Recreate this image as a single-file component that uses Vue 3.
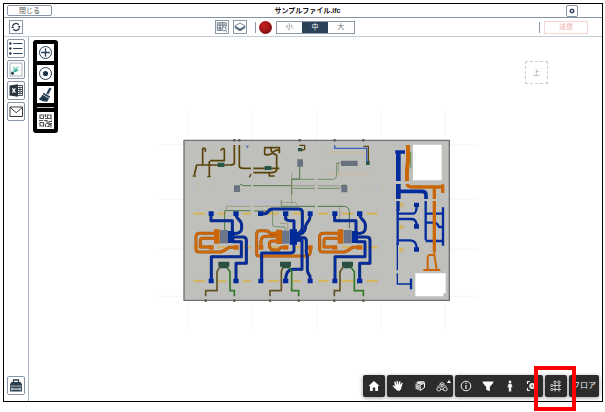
<script setup>
import { ref } from 'vue'

const size = ref('中')
const sizes = ['小', '中', '大']
const verticals = [24, 217, 410, 603, 796]
const horizontals = [29, 193, 342, 484]
const dashRows = [236, 337, 438]
const dashColumns = [[40, 75], [113, 138], [188, 213], [262, 297], [338, 363], [415, 445], [485, 520], [560, 593]]
const twinUnits = [0, 371]
const risers = [77, 163, 270, 356, 463, 550]
</script>

<template>
  <div class="page">
    <main class="frame">
      <header class="titlebar">
        <button class="close" type="button">閉じる</button>
        <h1>サンプルファイル.ifc</h1>
        <button class="gear" type="button" aria-label="設定">
          <svg viewBox="0 0 12 12"><circle cx="6" cy="6" r="2" fill="none" stroke="#34435a" stroke-width="1.6" /><circle cx="6" cy="6" r="2.8" fill="none" stroke="#34435a" stroke-width=".8" stroke-dasharray="1.1 1.1" /></svg>
        </button>
      </header>

      <div class="toolbar">
        <div class="zone left">
          <button class="tool" type="button" aria-label="更新">
            <svg viewBox="0 0 14 14" fill="none" stroke="#1f3347" stroke-width="1.4"><path d="M2.9 6.2A4.200 4.200 0 0 1 10.200 4.400M11.100 7.800A4.200 4.200 0 0 1 3.800 9.600" /><path d="M8.800 5.800h4L11 8ZM5.200 8.200h-4L3 6Z" fill="#1f3347" stroke="none" /></svg>
          </button>
        </div>
        <div class="zone middle">
          <button class="tool" type="button" aria-label="図面">
            <svg viewBox="0 0 14 14" fill="none" stroke="#5c6d7e" stroke-width="1"><path d="M1.500 2h10.500v5.500M1.500 2v9h5.500M1.500 5h10M4.700 2v9M8 2v5M1.500 8h5.500M3 3.600h1M6 3.600h1M9 3.600h2M3 9.500h3" /><circle cx="9.500" cy="9.300" r="2.300" /><path d="m11 11 1.700 1.700" /></svg>
          </button>
          <button class="tool" type="button" aria-label="レイヤー">
            <svg viewBox="0 0 14 14"><path d="M1 5.800v2.400L7 12l6-3.800V5.800L7 9.300Z" fill="#50657a" /><path d="M7 2.300 13 5.800 7 9.300 1 5.800Z" fill="#fff" stroke="#50657a" stroke-width=".9" /></svg>
          </button>
          <span class="rule"></span>
          <button class="ball" type="button" aria-label="色"></button>
          <div class="segments">
            <button v-for="s in sizes" :key="s" type="button" :class="{ active: s === size }" @click="size = s">{{ s }}</button>
          </div>
        </div>
        <div class="zone right">
          <span class="rule"></span>
          <button class="send" type="button">送信</button>
        </div>
      </div>

      <div class="body">
        <nav class="sidebar">
          <button type="button" aria-label="一覧">
            <svg viewBox="0 0 16 16" stroke="#2e4459" fill="#1c3044"><path d="M5.200 3h9.300M5.200 8h9.300M5.200 13h9.300" stroke-width="1.100" /><g stroke="none"><circle cx="2.300" cy="3" r="1.200" /><circle cx="2.300" cy="8" r="1.200" /><circle cx="2.300" cy="13" r="1.200" /></g></svg>
          </button>
          <button type="button" aria-label="ビュー">
            <svg viewBox="0 0 16 16"><path d="M2 1.500h12v13H2Z" fill="#fff" stroke="#8f9ba8" stroke-width=".8" /><path d="M4.800 11.500 5 4.200l2 2 4.500-1.700-2 3.500 2.500 1Z" fill="#9bd8cd" /><path d="m4.500 11.500 3.700-4.500 1.500 2.300Z" fill="#36ad9c" /><path d="m3.500 9.700 2.800 2-1.300 1.900-2-1Z" fill="#253846" /></svg>
          </button>
          <button type="button" aria-label="Excel">
            <svg viewBox="0 0 16 16"><path d="M9 3h5.500v10H9Z" fill="#fff" stroke="#353d46" stroke-width=".9" /><path d="M10 5h4M10 7h4M10 9h4M10 11h4M12 4v8" stroke="#454d56" stroke-width="1" /><path d="M1.500 3.100 10 1.800v12.400l-8.500-1.300Z" fill="#293541" /><path d="m4.300 5.800 3 4.400m0-4.400-3 4.400" stroke="#fff" stroke-width="1.200" /></svg>
          </button>
          <button type="button" aria-label="メール">
            <svg viewBox="0 0 16 16" fill="none" stroke="#3c3839" stroke-width="1"><path d="M2 3.500h12.500v9.500H2Z" /><path d="m2 3.700 6.200 5.500 6.300-5.500" /></svg>
          </button>
          <button class="bottom" type="button" aria-label="ツールボックス">
            <svg viewBox="0 0 16 16"><path d="M5.500 4.800V2.500h5v2.300" fill="none" stroke="#2d4052" stroke-width="1.300" /><path d="M3.500 4.500h9L14 6.700v2.500H2V6.700ZM2 9.500h12v4.500H2Z" fill="#2d4052" /><path d="M3 10.400 4.700 11.500h6.600L13 10.400M3 13l1.700-1.500M13 13l-1.700-1.500" fill="none" stroke="#fff" stroke-width="1" /><path d="M2.500 8.300h11" stroke="#b9c2ca" stroke-width=".6" /></svg>
          </button>
        </nav>

        <section class="canvas">
          <svg class="scene" viewBox="-453 -294 1719 1092" fill="none" role="img" aria-label="設備平面図">
            <g stroke="#f0f0ef" stroke-width="2">
              <path v-for="x in verticals" :key="'v' + x" :d="`M${x} -70V580`" />
              <path v-for="y in horizontals" :key="'h' + y" :d="`M-70 ${y}H890`" />
            </g>
            <path d="M12 16H808V496H12Z" fill="#bfc0bc" stroke="#6f716f" stroke-width="4" />
            <path d="M143 195h65v9h-65ZM225 195h75v9h-75Z" fill="#b5b9cb" opacity=".6" />
            <path d="M143 186h65M225 186h78" stroke="#d2c59e" stroke-width="2" opacity=".5" />

            <g stroke="#d3b463" stroke-width="7">
              <template v-for="y in dashRows" :key="y">
                <path v-for="c in dashColumns" :key="c[0]" :d="`M${c[0]} ${y}H${c[1]}`" />
              </template>
            </g>
            <g stroke="#d4b970" stroke-width="2" opacity=".8"><path d="M440 52h135M440 118h133" /><path d="M53 162h6M98 162h6M186 162h6M242 162h6M510 162h6M560 162h6M605 162h6M84 52h5M112 54h5" stroke-width="3" /></g>
            <g fill="#d3b463"><path d="M658 203h12v12h-12ZM658 270h12v12h-12ZM658 338h12v12h-12Z" /></g>

            <g stroke="#5a430a" stroke-width="5" stroke-linejoin="round">
              <path d="M163 30V85Q161 90 150 90H50L43 120M68 90V42Q71 37 76 42V50M88 125V78M90 77H133V43Q128 37 122 47M178 30V95Q180 100 190 100H213M220 100H298M300 48Q289 40 274 56Q262 62 254 58V38H298V55M272 38Q273 57 290 60V105Q287 113 275 113H220M268 113V123H284" />
              <path d="M358 31h16v12q-6 5-16 1M550 34h15v50" stroke-width="4" />
            </g>
            <path d="M38 123h10M82 125h10M208 127l5-10" stroke="#5a430a" stroke-width="4" />
            <g fill="#555"><circle cx="163" cy="16" r="4" /><circle cx="178" cy="16" r="4" /><circle cx="359" cy="16" r="4" /><circle cx="464" cy="16" r="4" /><circle cx="550" cy="16" r="4" /></g>
            <g fill="#285747"><path d="M113 83h20v13h-20ZM254 93h20v12h-20ZM354 39h13v10h-13ZM558 78h11v12h-11Z" /></g>
            <path d="M464 30v10h96v42" stroke="#395fbb" stroke-width="4" />
            <path d="m197 32 5 8 5-8Z" fill="#4b73b8" />
            <g fill="#6a7180"><path d="M352 73h17v22h-17ZM162 151h18v20h-18ZM483 77h50v16h-50ZM484 150h18v22h-18Z" /></g>
            <g stroke="#4b7842" stroke-width="2">
              <path d="M180 148q5 0 8 4H214M220 152H335M359 95V132H335V180M302 214H405M413 214H493Q507 215 508 230V280M134 290V227H212M222 228H278" stroke-width="3" />
              <path d="M335 133H405M413 133H460Q470 132 470 120V84H483M335 160H405M413 160H478L488 150H498M278 228V272Q280 276 315 276V288M304 195V214" />
            </g>
            <g stroke="#8b8b70" stroke-width="2"><path d="M335 113V207M335 152H405M413 152H478M139 227V214H210M220 214H300M479 215V262M475 82v30M300 202h46l9 13M300 265H323V285" /></g>
            <path d="M692 50V100" stroke="#608d45" stroke-width="3" />

            <g v-for="dx in twinUnits" :key="dx" :transform="`translate(${dx} 0)`">
              <g stroke-linejoin="round" stroke-linecap="round">
                <path d="M104 295H59Q48 295 48 305V342Q48 351 58 351H122Q133 348 148 337H168M102 310H69Q61 310 61 318V336H93" stroke="#9a5510" stroke-width="9" />
                <path d="M104 295H59Q48 295 48 305V342Q48 351 58 351H122Q133 348 148 337H168M102 310H69Q61 310 61 318V336H93" stroke="#d26806" stroke-width="6" />
                <path d="M93 240V257H157V290M168 240Q170 249 182 260Q187 270 184 285Q182 296 158 296M160 306H189Q199 306 199 316V385H168V435M160 320H184V365H94V435" stroke="#10286b" stroke-width="9" />
                <path d="M93 240V257H157V290M168 240Q170 249 182 260Q187 270 184 285Q182 296 158 296M160 306H189Q199 306 199 316V385H168V435M160 320H184V365H94V435" stroke="#042ca0" stroke-width="6" />
              </g>
              <path d="M86 229h15v14H86ZM160 229h16v14h-16ZM86 431h15v14H86ZM160 431h16v14h-16ZM144 288h19v36h-19Z" fill="#002a9a" />
              <path d="M102 283h17v43h-17ZM86 331h15v13H86ZM160 331h16v13h-16Z" fill="#cb660a" />
              <path d="M120 285h24v40h-24Z" fill="#6b7689" />
            </g>

            <g stroke-linejoin="round" stroke-linecap="round">
              <path d="M290 295H271Q266 287 255 287H239Q230 287 230 297V357Q230 363 238 363H380Q391 361 391 350V337M243 337V319Q244 304 257 304H290M290 318H279Q268 318 268 328Q268 345 282 345H296L303 337H318" stroke="#9a5510" stroke-width="9" />
              <path d="M290 295H271Q266 287 255 287H239Q230 287 230 297V357Q230 363 238 363H380Q391 361 391 350V337M243 337V319Q244 304 257 304H290M290 318H279Q268 318 268 328Q268 345 282 345H296L303 337H318" stroke="#d26806" stroke-width="6" />
              <path d="M242 236H252Q262 237 268 225L276 222H356Q367 222 367 232V276Q367 291 350 297M317 240V251Q319 256 329 257H342V290M390 240Q392 252 382 263Q376 269 376 280Q375 294 350 302M342 320V346Q343 353 330 354H245V435M350 308H372Q379 309 379 319V345Q377 351 382 363V403Q382 415 390 423V435M350 316H366V403H338Q317 405 317 435" stroke="#10286b" stroke-width="9" />
              <path d="M242 236H252Q262 237 268 225L276 222H356Q367 222 367 232V276Q367 291 350 297M317 240V251Q319 256 329 257H342V290M390 240Q392 252 382 263Q376 269 376 280Q375 294 350 302M342 320V346Q343 353 330 354H245V435M350 308H372Q379 309 379 319V345Q377 351 382 363V403Q382 415 390 423V435M350 316H366V403H338Q317 405 317 435" stroke="#042ca0" stroke-width="6" />
            </g>
            <path d="M234 229h16v14h-16ZM309 229h16v14h-16ZM383 229h15v14h-15ZM235 431h15v14h-15ZM309 431h16v14h-16ZM383 431h15v14h-15ZM329 283h22v46h-22Z" fill="#002a9a" />
            <path d="M288 284h18v43h-18ZM236 330h14v14h-14ZM310 331h15v13h-15ZM384 331h14v14h-14Z" fill="#cb660a" />
            <path d="M306 287h22v39h-22Z" fill="#6b7689" />

            <g stroke-width="5">
              <path d="M120 395 111 410V467H77V484M309 395 304 410V467H270V484M490 395 480 410V467H463V484" stroke="#625223" />
              <path d="M140 395 150 410V467H163V484M327 395 335 410V467H356V484M512 395 523 410V467H550V484" stroke="#327629" />
            </g>
            <path d="M115 380h33v15h-5v5h-23v-5h-5ZM300 380h33v15h-5v5h-22v-5h-6ZM486 380h33v15h-5v5h-23v-5h-5Z" fill="#294f40" />
            <circle v-for="x in risers" :key="x" :cx="x" cy="497" r="4" fill="#515950" />

            <g stroke="#022b9c" stroke-linejoin="round">
              <path d="M655 50V138M655 147V192" stroke-width="14" />
              <path d="M654 198V228" stroke-width="10" />
              <path d="M646 51H675M660 169H727Q738 170 738 180V192" stroke-width="11" />
              <path d="M653 225V330" stroke-width="7" />
              <path d="M652 325V406M652 415V447H692" stroke-width="4" />
              <path d="M655 236H700Q710 235 710 210M655 252H695Q710 252 710 274M655 316H690Q710 315 710 343M737 198V316M737 236H790M737 263H764Q772 264 777 276H789M737 318H790M789 217V332" stroke-width="7" />
              <path d="M693 431v32" stroke-width="7" />
            </g>
            <path d="M702 203h15v13h-15ZM702 268h15v13h-15ZM702 337h15v13h-15Z" fill="#002a9a" />
            <g stroke="#c96606" stroke-linejoin="round">
              <path d="M684 30V80Q680 95 681 138" stroke-width="12" />
              <path d="M681 147Q683 156 695 156H783M763 156V192M763 198V350" stroke-width="10" />
              <path d="M788 148v26" stroke-width="10" />
              <path d="M763 350V360L770 403M763 360H748Q743 361 743 371V403M730 405H781" stroke-width="6" />
            </g>
            <path d="M699 29h86v107h-86ZM706 415h91v60h-7v9h-84Z" fill="#fff" />
          </svg>

          <div class="palette">
            <button type="button" aria-label="追加"><svg viewBox="0 0 17 17" fill="none" stroke="#253d54"><circle cx="8.500" cy="8.500" r="6" stroke-width="1" /><path d="M8.500 4.200v8.600M4.200 8.500h8.600" stroke-width="1.300" /></svg></button>
            <button type="button" aria-label="選択"><svg viewBox="0 0 17 17"><circle cx="8.500" cy="8.500" r="6" fill="none" stroke="#253d54" /><circle cx="8.500" cy="8.500" r="2.600" fill="#1b334b" /></svg></button>
            <button type="button" aria-label="ブラシ"><svg viewBox="0 0 17 17" fill="#203950"><path d="m12.500 1.500 2 1-3.200 6-2-1Z" /><path d="m6.500 6.800 6.700 3.600-.8 1.500-6.700-3.600Z" /><path d="m5.300 8.700 6.700 3.700-2 3.500-1.200-.8-.7 1-1.400-1-.8.500-1.300-1.200-1.800-.3L2 12.800q2.700-1.600 3.300-4.100Z" /></svg></button>
            <hr />
            <button type="button" aria-label="QRコード"><svg viewBox="0 0 17 17" fill="none" stroke="#555" stroke-width="1.200"><path d="M3 3h3.500v3.500H3ZM10.500 3H14v3.500h-3.500ZM3 10.500h3.500V14H3Z" /><path d="M8.500 2v3M8 6.500h2M2 8.500h4M7 8.500h3v3h2v-2h3M8.500 12v3M10 14.500h2v-2h2v3M14 8h1M13 11.500h2" /></svg></button>
          </div>

          <button class="viewcube" type="button">上</button>

          <div class="dock">
            <div class="group">
              <button type="button" aria-label="ホーム"><svg viewBox="0 0 22 22"><path d="m11 6 5.500 5H15v5h-2.800v-3.500H9.800V16H7v-5H5.500Z" fill="#fff" /></svg></button>
            </div>
            <div class="group">
              <button type="button" aria-label="移動"><svg viewBox="0 0 22 22" fill="none" stroke="#fff" stroke-width="1.500" stroke-linecap="round"><path d="m8.700 10-.7-2.800M10.500 9.500 10.300 6.500M12.300 9.500l.5-2.500M14 10.500l1-2M8.500 13 6.500 11" /><path d="M8.500 9.800h6l-.7 4.200q-.7 1.700-2.500 1.500-1.800 0-2.700-2Z" fill="#fff" stroke-width=".6" /></svg></button>
              <button type="button" aria-label="断面"><svg viewBox="0 0 22 22"><path d="m6.500 8 3.700-1.500 4.800 1-4.300 2Z" fill="#e8e8e8" /><path d="m6.500 8.500 4 1.500v5.500l-4-1.700Z" fill="#bbb" /><path d="m11.200 10 4.300-2v4.500l-4.300 3Z" fill="none" stroke="#fff" stroke-width="1" /><path d="m8 7 7-.5v3" fill="none" stroke="#ddd" /></svg></button>
              <button class="badge-host" type="button" aria-label="分解"><svg viewBox="0 0 22 22" fill="none" stroke="#dedede" stroke-width=".9"><path d="m11 7.500 2 1.100v2.200L11 12l-2-1.200V8.600ZM9 8.600l2 1.200 2-1.200M11 9.800V12M7.800 12.200l1.900 1v2L7.800 16l-1.900-.8v-2ZM14.200 12.200l1.900 1v2l-1.900.8-1.900-.8v-2ZM9.700 14.200h2.600M8.500 10 6.500 12M13.500 10l2 2" /></svg><span class="arrow"></span></button>
            </div>
            <div class="group">
              <button type="button" aria-label="情報"><svg viewBox="0 0 22 22" fill="none" stroke="#eee"><circle cx="11" cy="11" r="4.800" stroke-width="1" /><path d="M11 10v4M11 7.700v1.200" stroke-width="1.200" /></svg></button>
              <button type="button" aria-label="フィルター"><svg viewBox="0 0 22 22"><path d="M5.700 6.500h10.600v1.200L12.800 12v4.300l-3.600-1.500V12L5.700 7.700Z" fill="#fff" /></svg></button>
              <button type="button" aria-label="歩行"><svg viewBox="0 0 22 22" fill="#eee"><circle cx="11" cy="7" r="1.400" /><path d="M9.600 8.800h2.800l1.100 3.300-.9.500-.4-.8v4.700H9.800v-4.700l-.4.800-.9-.5Z" /></svg></button>
              <button type="button" aria-label="フォーカス"><svg viewBox="0 0 22 22" fill="none" stroke="#eee" stroke-width="1.200"><path d="M6.500 9V6.500H9M13 6.500h2.500V9M15.500 13v2.500H13M9 15.500H6.500V13" /><circle cx="11.200" cy="11" r="2.400" fill="#ddd" /><circle cx="11.200" cy="11" r=".8" fill="#222" stroke="none" /></svg></button>
            </div>
            <div class="group marked">
              <button type="button" aria-label="通り芯"><svg viewBox="0 0 22 22" fill="none" stroke="#ddd" stroke-width=".9"><path d="M8 10.500h8M8 14.500h8M10 8.500V16.500M14 8.500V16.500" /><circle cx="10" cy="7.200" r="1.200" /><circle cx="14" cy="7.200" r="1.200" /><circle cx="6.800" cy="10.500" r="1.100" /><circle cx="6.800" cy="14.500" r="1.100" /></svg></button>
            </div>
            <div class="group">
              <button class="floor" type="button">フロア</button>
            </div>
          </div>
        </section>
      </div>
    </main>
  </div>
</template>

<style>
body {
  background: #fff;
}
</style>

<style scoped>
* {
  box-sizing: border-box;
}
.page {
  height: 100vh;
  padding: 3px 2px 10px 3px;
  font-family: "Liberation Sans", "Noto Sans CJK JP", sans-serif;
  font-size: 7px;
  color: #333;
}
button {
  display: flex;
  align-items: center;
  justify-content: center;
  margin: 0;
  padding: 0;
  border: 0;
  background: #fff;
  font: inherit;
  color: inherit;
  line-height: 10px;
}
svg {
  display: block;
  width: 100%;
  height: 100%;
}
.frame {
  display: flex;
  flex-direction: column;
  height: 100%;
  border: 1px solid #000;
}
.titlebar {
  display: grid;
  grid-template-columns: 1fr auto 1fr;
  align-items: center;
  height: 14px;
  padding: 0 24px 0 3px;
  border-bottom: 1px solid #8492a2;
}
.close {
  width: 45px;
  height: 11px;
  border: 1px solid #8795a6;
  border-radius: 2px;
  color: #555;
}
h1 {
  margin: 0 0 0 30px;
  font-size: 7px;
  line-height: 12px;
  font-weight: 700;
  color: #111;
}
.gear {
  justify-self: end;
  width: 12px;
  height: 12px;
  border: 1px solid #8795a6;
  border-radius: 2px;
}
.toolbar {
  display: grid;
  grid-template-columns: 1fr auto 1fr;
  align-items: center;
  height: 19px;
  padding: 0 14px 0 5px;
  border-bottom: 1px solid #c3cdd8;
}
.zone {
  display: flex;
  align-items: center;
  gap: 4px;
}
.middle {
  margin-right: 28px;
}
.right {
  justify-content: flex-end;
}
.tool {
  width: 14px;
  height: 14px;
  border: 1px solid #8b98a6;
}
.rule {
  width: 1px;
  height: 11px;
  margin-left: 4px;
  background: #8b98a6;
}
.ball {
  width: 13px;
  height: 13px;
  margin-left: -1px;
  border-radius: 50%;
  background: radial-gradient(circle at 40% 35%, #c9201f, #9d1518 50%, #560c10);
}
.segments {
  display: flex;
  width: 79px;
  height: 13px;
  border: 1px solid #8b98a6;
}
.segments button {
  flex: 1;
  color: #777;
}
.segments .active {
  background: #2c4257;
  color: #fff;
}
.send {
  width: 44px;
  height: 13px;
  border: 1px solid #f8d4d4;
  color: #f3aeae;
}
.body {
  display: flex;
  flex: 1;
  min-height: 0;
}
.sidebar {
  display: flex;
  flex-direction: column;
  gap: 2px;
  width: 25px;
  padding: 2px 3px 6px 3px;
  border-right: 1px solid #a9b6c5;
}
.sidebar button {
  height: 19px;
  border: 1px solid #8795a6;
  border-radius: 2px;
}
.sidebar .bottom {
  margin-top: auto;
}
.canvas {
  position: relative;
  flex: 1;
  min-width: 0;
}
.palette {
  position: absolute;
  top: 3px;
  left: 4px;
  display: flex;
  flex-direction: column;
  gap: 4px;
  padding: 4px;
  border-radius: 3px;
  background: #000;
}
.palette button {
  width: 17px;
  height: 17px;
}
.palette hr {
  width: 100%;
  height: 1px;
  margin: 0;
  border: 0;
  background: #bbb;
}
.viewcube {
  position: absolute;
  top: 24px;
  right: 54px;
  width: 23px;
  height: 23px;
  border: 1px dashed #ccc;
  color: #999;
}
.dock {
  position: absolute;
  right: 3px;
  bottom: 4px;
  display: flex;
  gap: 2px;
}
.group {
  display: flex;
  position: relative;
  border-radius: 2px;
  background: #2c2c2c;
  box-shadow: 0 1px 4px rgba(0, 0, 0, .4);
}
.group button {
  width: 22px;
  height: 22px;
  background: transparent;
}
.group .floor {
  width: 30px;
  font-size: 8px;
  color: #eee;
}
.group .badge-host {
  position: relative;
}
.arrow {
  position: absolute;
  top: 5px;
  right: 2px;
  border: 2px solid transparent;
  border-top: 0;
  border-bottom: 3px solid #fff;
}
.marked::after {
  content: "";
  position: absolute;
  z-index: 1;
  inset: -9px -9px -14px -11px;
  border: 4px solid #f00;
  pointer-events: none;
}
</style>
